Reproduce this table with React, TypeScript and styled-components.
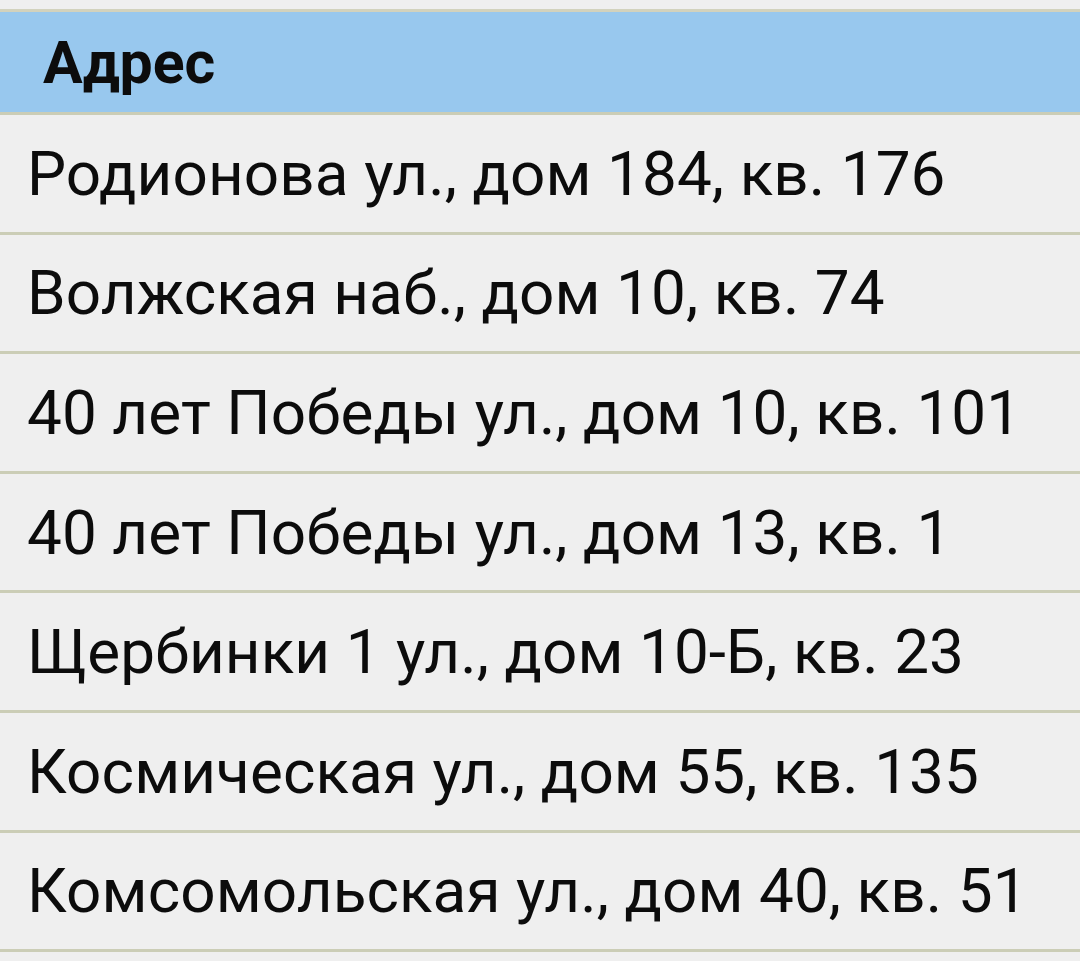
import React from "react";
import styled, { createGlobalStyle } from "styled-components";

const addresses = [
  "Родионова ул., дом 184, кв. 176",
  "Волжская наб., дом 10, кв. 74",
  "40 лет Победы ул., дом 10, кв. 101",
  "40 лет Победы ул., дом 13, кв. 1",
  "Щербинки 1 ул., дом 10-Б, кв. 23",
  "Космическая ул., дом 55, кв. 135",
  "Комсомольская ул., дом 40, кв. 51",
];

const App = () => {
  return (
    <>
      <GlobalStyle />
      <Wrapper>
        <Table>
          <HeaderRow>Адрес</HeaderRow>
          {addresses.map((address) => (
            <Row key={address}>{address}</Row>
          ))}
        </Table>
      </Wrapper>
    </>
  );
};

export default App;

const GlobalStyle = createGlobalStyle`
  html, body {
    margin: 0;
    padding: 0;
    background-color: #efefef;
    overflow: hidden;
  }
`;

const Wrapper = styled.div`
  width: 1080px;
  height: 961px;
  padding-top: 9px;
  box-sizing: border-box;
  background-color: #efefef;
  font-family: Roboto, "Noto Sans", sans-serif;
  color: #0c0c0c;
`;

const Table = styled.div`
  display: flex;
  flex-direction: column;
  border-top: solid 3px #d2d2bd;
`;

const HeaderRow = styled.div`
  display: flex;
  align-items: center;
  height: 100px;
  padding-left: 43px;
  background-color: #98c8ee;
  border-bottom: solid 3px #cbcdb6;
  font-size: 59px;
  font-weight: bold;
`;

const Row = styled.div`
  display: flex;
  align-items: center;
  height: 116.6px;
  padding-left: 27px;
  border-bottom: solid 3px #cbcdb6;
  font-size: 62px;
  letter-spacing: 0.1px;
  white-space: nowrap;
`;
